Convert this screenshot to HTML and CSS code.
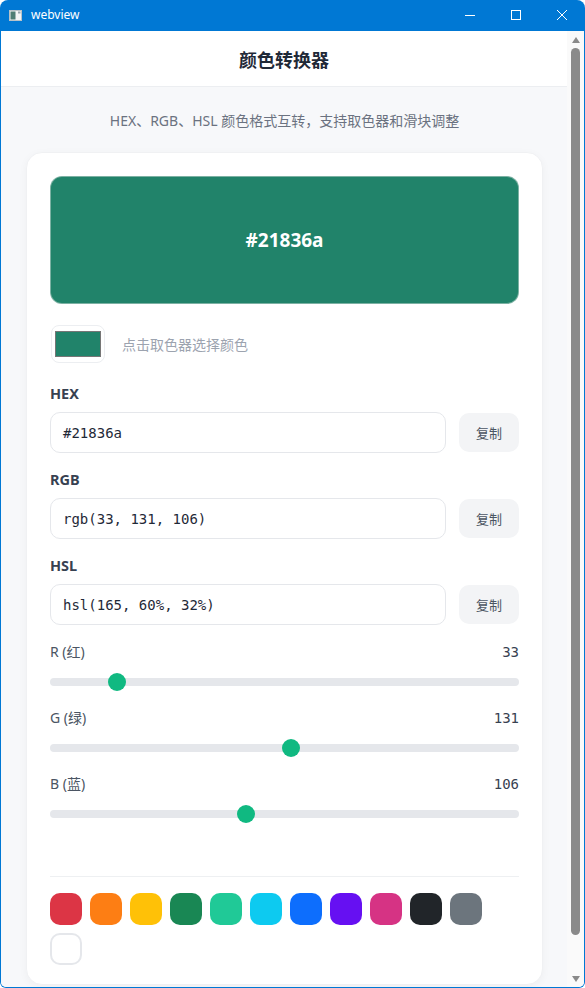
FILE: index.html
```html
<!DOCTYPE html>
<html lang="zh-CN">
<head>
<meta charset="utf-8">
<title>webview</title>
<link rel="stylesheet" href="styles.css">
</head>
<body>
<div class="window">
  <div class="titlebar">
    <svg class="app-icon" width="13" height="11" viewBox="0 0 13 11">
      <rect x="0.5" y="0.5" width="12" height="10" fill="#f4f4f4" stroke="#b9c2c8"/>
      <rect x="1.5" y="1.5" width="5" height="8" fill="#4f7d73"/>
      <rect x="9" y="1.5" width="2.5" height="2" fill="#9aa6ad"/>
    </svg>
    <span class="win-title">webview</span>
    <div class="caption">
      <svg class="cap-btn" width="46" height="31" viewBox="0 0 46 31"><path d="M18 15.5h10" stroke="#fff" stroke-width="1"/></svg>
      <svg class="cap-btn" width="46" height="31" viewBox="0 0 46 31"><rect x="18.5" y="10.5" width="9" height="9" fill="none" stroke="#fff" stroke-width="1"/></svg>
      <svg class="cap-btn" width="46" height="31" viewBox="0 0 46 31"><path d="M18 10l10 10M28 10L18 20" stroke="#fff" stroke-width="1"/></svg>
    </div>
  </div>
  <div class="client">
    <div class="page">
      <header class="app-header">
        <h1 class="app-title">颜色转换器</h1>
      </header>
      <main class="main">
        <p class="subtitle">HEX、RGB、HSL 颜色格式互转，支持取色器和滑块调整</p>
        <section class="card">
          <div class="preview"><span class="preview-text">#21836a</span></div>

          <div class="picker-row">
            <div class="picker"><span class="picker-swatch"></span></div>
            <span class="picker-hint">点击取色器选择颜色</span>
          </div>

          <div class="field">
            <label class="field-label">HEX</label>
            <div class="field-row">
              <div class="field-input">#21836a</div>
              <button class="copy-btn">复制</button>
            </div>
          </div>
          <div class="field">
            <label class="field-label">RGB</label>
            <div class="field-row">
              <div class="field-input">rgb(33, 131, 106)</div>
              <button class="copy-btn">复制</button>
            </div>
          </div>
          <div class="field">
            <label class="field-label">HSL</label>
            <div class="field-row">
              <div class="field-input">hsl(165, 60%, 32%)</div>
              <button class="copy-btn">复制</button>
            </div>
          </div>

          <div class="sliders">
            <div class="slider">
              <div class="slider-head"><span class="slider-name">R (红)</span><span class="slider-val">33</span></div>
              <input class="range" type="range" min="0" max="255" value="33">
            </div>
            <div class="slider">
              <div class="slider-head"><span class="slider-name">G (绿)</span><span class="slider-val">131</span></div>
              <input class="range" type="range" min="0" max="255" value="131">
            </div>
            <div class="slider">
              <div class="slider-head"><span class="slider-name">B (蓝)</span><span class="slider-val">106</span></div>
              <input class="range" type="range" min="0" max="255" value="106">
            </div>
          </div>

          <div class="palette">
            <span class="sw sw-red"></span>
            <span class="sw sw-orange"></span>
            <span class="sw sw-yellow"></span>
            <span class="sw sw-green"></span>
            <span class="sw sw-teal"></span>
            <span class="sw sw-cyan"></span>
            <span class="sw sw-blue"></span>
            <span class="sw sw-indigo"></span>
            <span class="sw sw-pink"></span>
            <span class="sw sw-dark"></span>
            <span class="sw sw-gray"></span>
            <span class="sw sw-white"></span>
          </div>
        </section>
      </main>
    </div>
    <div class="scrollbar">
      <span class="arrow-up"></span>
      <span class="thumb"></span>
      <span class="arrow-down"></span>
    </div>
  </div>
</div>
</body>
</html>
```

FILE: styles.css
```css
* { box-sizing: border-box; }
html, body {
  margin: 0;
  padding: 0;
  width: 585px;
  height: 988px;
  overflow: hidden;
  background: #ffffff;
}
body {
  font-family: "Noto Sans", "Noto Sans CJK SC", sans-serif;
}
.window {
  width: 585px;
  height: 988px;
  display: flex;
  flex-direction: column;
  background: #0078d4;
  border-radius: 8px 8px 6px 6px;
  overflow: hidden;
}
.titlebar {
  height: 31px;
  flex: 0 0 31px;
  display: flex;
  align-items: center;
  color: #ffffff;
}
.app-icon {
  margin-left: 9px;
  margin-top: -1px;
}
.win-title {
  margin-left: 9px;
  font-family: "Noto Sans", sans-serif;
  font-size: 12px;
  line-height: 16px;
  margin-top: -1px;
}
.caption {
  margin-left: auto;
  display: flex;
  margin-right: 0;
}
.cap-btn { display: block; }
.client {
  flex: 1;
  display: flex;
  margin: 0 1px 1px 1px;
  background: #f7f8fa;
  overflow: hidden;
  border-radius: 0 0 5px 5px;
}
.page {
  flex: 1;
  overflow: hidden;
  background: #f7f8fa;
}
.app-header {
  height: 56px;
  background: #ffffff;
  border-bottom: 1px solid #eceef1;
  display: flex;
  align-items: center;
  justify-content: center;
}
.app-title {
  margin: 0;
  font-size: 18px;
  font-weight: 700;
  color: #1f2937;
  line-height: 24px;
  font-family: "Noto Sans CJK SC", sans-serif;
  margin-top: 1px;
}
.main {
  padding: 24px 24px 0 25px;
}
.subtitle {
  margin: 0 0 21px 0;
  text-align: center;
  font-size: 14px;
  line-height: 20px;
  color: #6b7280;
}
.card {
  background: #ffffff;
  border-radius: 16px;
  border: 1px solid #f0f1f3;
  box-shadow: 0 2px 8px rgba(0, 0, 0, 0.04);
  padding: 23px 23px 19px 23px;
}
.preview {
  height: 128px;
  border-radius: 12px;
  background: #21836a;
  border: 1px solid rgba(200, 215, 210, 0.55);
  display: flex;
  align-items: center;
  justify-content: center;
}
.preview-text {
  color: #ffffff;
  font-size: 19px;
  font-weight: 700;
  line-height: 28px;
}
.picker-row {
  margin-top: 21px;
  display: flex;
  align-items: center;
  height: 38px;
}
.picker {
  width: 54px;
  height: 38px;
  border: 1px solid #eceef1;
  border-radius: 8px;
  background: #ffffff;
  display: flex;
  align-items: center;
  justify-content: center;
  margin-left: 1px;
}
.picker-swatch {
  width: 46px;
  height: 26px;
  background: #21836a;
  border: 1px solid #767676;
}
.picker-hint {
  margin-left: 17px;
  font-size: 14px;
  color: #9ca3af;
  line-height: 20px;
  font-family: "Noto Sans CJK SC", sans-serif;
}
.field {
  margin-top: 20px;
}
.field + .field {
  margin-top: 16px;
}
.field-label {
  display: block;
  font-size: 14.5px;
  font-weight: 700;
  color: #374151;
  line-height: 20px;
  margin-bottom: 9px;
}
.field-row {
  display: flex;
  align-items: center;
  gap: 13px;
}
.field-input {
  flex: 1;
  height: 41px;
  border: 1px solid #e5e7eb;
  border-radius: 10px;
  background: #ffffff;
  padding: 0 12px;
  display: flex;
  align-items: center;
  font-family: "DejaVu Sans Mono", "Liberation Mono", monospace;
  font-size: 14px;
  color: #1f2937;
}
.copy-btn {
  width: 60px;
  height: 39px;
  border: none;
  border-radius: 10px;
  background: #f3f4f6;
  color: #4b5563;
  font-size: 13px;
  font-family: "Noto Sans CJK SC", sans-serif;
  padding: 0;
}
.sliders {
  margin-top: 17px;
  padding-bottom: 16px;
}
.slider {
  margin-top: 16px;
}
.slider:first-child {
  margin-top: 0;
}
.slider-head {
  display: flex;
  justify-content: space-between;
  align-items: center;
  height: 20px;
  margin-bottom: 10px;
}
.slider-name {
  font-size: 14px;
  color: #4b5563;
  line-height: 20px;
}
.slider-val {
  font-family: "DejaVu Sans Mono", "Liberation Mono", monospace;
  font-size: 14px;
  color: #374151;
}
.range {
  -webkit-appearance: none;
  appearance: none;
  display: block;
  width: 100%;
  height: 20px;
  margin: 0;
  background: transparent;
}
.range::-webkit-slider-runnable-track {
  height: 8px;
  background: #e5e7eb;
  border-radius: 4px;
}
.range::-webkit-slider-thumb {
  -webkit-appearance: none;
  appearance: none;
  width: 18px;
  height: 18px;
  border-radius: 50%;
  background: #10b981;
  border: none;
  margin-top: -5px;
}
.palette {
  margin-top: 36px;
  border-top: 1px solid #eef0f2;
  padding-top: 16px;
  display: flex;
  flex-wrap: wrap;
  gap: 8px;
}
.sw {
  width: 32px;
  height: 32px;
  border-radius: 10px;
  display: block;
}
.sw-red { background: #dc3545; }
.sw-orange { background: #fd7e14; }
.sw-yellow { background: #ffc107; }
.sw-green { background: #198754; }
.sw-teal { background: #20c997; }
.sw-cyan { background: #0dcaf0; }
.sw-blue { background: #0d6efd; }
.sw-indigo { background: #6610f2; }
.sw-pink { background: #d63384; }
.sw-dark { background: #212529; }
.sw-gray { background: #6c757d; }
.sw-white { background: #ffffff; border: 2px solid #e5e7eb; }
.scrollbar {
  width: 17px;
  flex: 0 0 17px;
  background: #fafafa;
  display: flex;
  flex-direction: column;
  align-items: center;
}
.arrow-up {
  margin-top: 6px;
  width: 0;
  height: 0;
  border-left: 4px solid transparent;
  border-right: 4px solid transparent;
  border-bottom: 6px solid #8a8a8a;
}
.thumb {
  margin-top: 5px;
  width: 9px;
  height: 887px;
  border-radius: 5px;
  background: #8a8a8a;
}
.arrow-down {
  margin-top: auto;
  margin-bottom: 5px;
  width: 0;
  height: 0;
  border-left: 4px solid transparent;
  border-right: 4px solid transparent;
  border-top: 6px solid #8a8a8a;
}
```
